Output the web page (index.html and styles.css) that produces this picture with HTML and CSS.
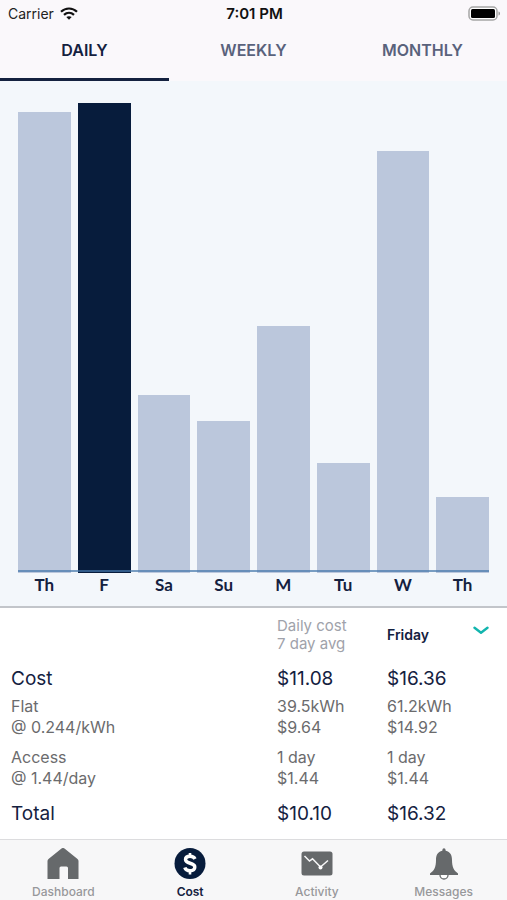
FILE: index.html
```html
<!DOCTYPE html>
<html lang="en">
<head>
    <meta charset="UTF-8">
    <meta name="viewport" content="width=device-width, initial-scale=1.0">
    <title>Energy Cost</title>
    <link rel="stylesheet" href="styles.css">
</head>
<body>
    <header>
        <div class="status-bar">
            <div class="carrier">
                <span>Carrier</span>
                <svg width="18" height="13" viewBox="0 0 18 13" fill="none" stroke="#111" stroke-width="2.2">
                    <path d="M1 4.8C5.6.4 12.4.4 17 4.8"/>
                    <path d="M4 7.9C7 5.1 11 5.1 14 7.9"/>
                    <path d="M9 12.8L6.3 10.1C7.9 8.8 10.1 8.8 11.7 10.1Z" fill="#111" stroke="none"/>
                </svg>
            </div>
            <span class="time">7:01 PM</span>
            <svg class="battery" width="33" height="15" viewBox="0 0 33 15">
                <rect x="1" y="1" width="28" height="13" rx="4" fill="#fff" stroke="#a5a5a5" stroke-width="1.5"/>
                <rect x="3" y="3" width="24" height="9" rx="1.5" fill="#000"/>
                <path d="M30.5 5.5C32.5 6 32.5 9 30.5 9.5Z" fill="#999"/>
            </svg>
        </div>
        <nav class="tabs">
            <a href="#daily" class="active">DAILY</a>
            <a href="#weekly">WEEKLY</a>
            <a href="#monthly">MONTHLY</a>
        </nav>
    </header>

    <main>
        <section class="chart">
            <div class="bars">
                <div class="bar" style="height: 98.1%"></div>
                <div class="bar selected" style="height: 100%"></div>
                <div class="bar" style="height: 37.9%"></div>
                <div class="bar" style="height: 32.3%"></div>
                <div class="bar" style="height: 52.5%"></div>
                <div class="bar" style="height: 23.4%"></div>
                <div class="bar" style="height: 89.7%"></div>
                <div class="bar" style="height: 16.2%"></div>
            </div>
            <div class="days">
                <span>Th</span>
                <span>F</span>
                <span>Sa</span>
                <span>Su</span>
                <span>M</span>
                <span>Tu</span>
                <span>W</span>
                <span>Th</span>
            </div>
        </section>

        <table class="costs">
            <thead>
                <tr>
                    <td></td>
                    <th class="average" scope="col">Daily cost<br>7 day avg</th>
                    <th class="day" scope="col">
                        <div class="day-picker">
                            <select aria-label="Day">
                                <option>Thursday</option>
                                <option selected>Friday</option>
                                <option>Saturday</option>
                                <option>Sunday</option>
                                <option>Monday</option>
                                <option>Tuesday</option>
                                <option>Wednesday</option>
                            </select>
                            <svg width="16" height="9" viewBox="0 0 16 9" fill="none" stroke="#12b5ae" stroke-width="2.4" stroke-linecap="round" stroke-linejoin="round">
                                <path d="M1.5 1.8L8 6.8L14.5 1.8"/>
                            </svg>
                        </div>
                    </th>
                </tr>
            </thead>
            <tbody>
                <tr class="cost">
                    <th scope="row">Cost</th>
                    <td>$11.08</td>
                    <td>$16.36</td>
                </tr>
                <tr class="rate">
                    <th scope="row">Flat<br>@ 0.244/kWh</th>
                    <td>39.5kWh<br>$9.64</td>
                    <td>61.2kWh<br>$14.92</td>
                </tr>
                <tr class="rate">
                    <th scope="row">Access<br>@ 1.44/day</th>
                    <td>1 day<br>$1.44</td>
                    <td>1 day<br>$1.44</td>
                </tr>
                <tr class="total">
                    <th scope="row">Total</th>
                    <td>$10.10</td>
                    <td>$16.32</td>
                </tr>
            </tbody>
        </table>
    </main>

    <nav class="bottom-nav">
        <a href="#dashboard">
            <svg width="32" height="32" viewBox="0 0 32 32">
                <path d="M14.5 .5Q16-.6 17.5 .5L30.5 11Q31.5 12 31.5 13V31H21V20Q21 18.5 19.5 18.5H14Q12.5 18.5 12.5 20V31H.5V13Q.5 12 1.5 11Z" fill="#66696b"/>
            </svg>
            <span>Dashboard</span>
        </a>
        <a href="#cost" class="active">
            <svg width="32" height="32" viewBox="0 0 32 32">
                <circle cx="16" cy="15.5" r="15.5" fill="#071c3c"/>
                <path d="M21 11C20 8.8 18.5 8.3 16 8.3C13.2 8.3 11.5 9.5 11.5 11.6C11.5 16.5 20.8 14 20.8 19C20.8 21.3 18.8 22.7 16 22.7C13.2 22.7 11.5 21.8 10.8 19.5" fill="none" stroke="#fff" stroke-width="3.4"/>
                <path d="M16 5V9M16 22V26.5" stroke="#fff" stroke-width="2.6"/>
            </svg>
            <span>Cost</span>
        </a>
        <a href="#activity">
            <svg width="32" height="32" viewBox="0 0 32 32">
                <rect x=".5" y="3.5" width="31" height="24" rx="2.5" fill="#66696b"/>
                <path d="M3.5 8L8.5 13L11.5 10.8L19.5 19L27 12.5" fill="none" stroke="#f7f7f8" stroke-width="1.5"/>
                <circle cx="19.5" cy="19.5" r="2" fill="#fff"/>
            </svg>
            <span>Activity</span>
        </a>
        <a href="#messages">
            <svg width="32" height="32" viewBox="0 0 32 32">
                <circle cx="16" cy="27" r="4" fill="#fff" stroke="#66696b" stroke-width="1.3"/>
                <path d="M14.3 2.8C14.3-.5 17.7-.5 17.7 2.8C22.5 3.8 24 7.5 24 12C24 19.5 26 22.5 30 25.5V27H2V25.5C6 22.5 8 19.5 8 12C8 7.5 9.5 3.8 14.3 2.8Z" fill="#66696b"/>
            </svg>
            <span>Messages</span>
        </a>
    </nav>
</body>
</html>
```
FILE: styles.css
```css
* {
    box-sizing: border-box;
}
body {
    display: flex;
    flex-direction: column;
    height: 100vh;
    min-height: 640px;
    margin: 0;
    font-family: Inter, Roboto, sans-serif;
    background-color: #fff;
    color: #14213f;
}
a {
    text-decoration: none;
}

/* Status bar and tabs */
header {
    background-color: #faf8fb;
}
.status-bar {
    display: grid;
    grid-template-columns: 1fr auto 1fr;
    align-items: center;
    height: 27px;
    padding: 0 6px 0 8px;
    font-size: 14px;
    color: #222;
}
.carrier {
    display: flex;
    align-items: center;
    gap: 6px;
}
.time {
    font-size: 15px;
    font-weight: 600;
    color: #111;
}
.battery {
    justify-self: end;
}
.tabs {
    display: grid;
    grid-template-columns: repeat(3, 1fr);
}
.tabs a {
    height: 54px;
    border-bottom: 3px solid transparent;
    font-size: 16px;
    font-weight: 600;
    line-height: 46px;
    text-align: center;
    color: #59627c;
}
.tabs a.active {
    border-color: #14213f;
    color: #14213f;
}

main {
    flex: 1;
    display: flex;
    flex-direction: column;
}

/* Chart */
.chart {
    flex: 1;
    display: flex;
    flex-direction: column;
    padding: 22px 18px 9px;
    background-color: #f3f7fb;
    border-bottom: 2px solid #c2c5ca;
}
.bars,
.days {
    display: grid;
    grid-template-columns: repeat(8, 1fr);
    column-gap: 7px;
}
.bars {
    position: relative;
    flex: 1;
    align-items: end;
}
.bars::after {
    content: "";
    position: absolute;
    left: 0;
    right: 0;
    bottom: 1px;
    height: 2px;
    background-color: rgba(67, 118, 170, 0.7);
}
.bar {
    background-color: #bbc7dc;
}
.bar.selected {
    background-color: #071c3c;
}
.days {
    font-family: Lato, sans-serif;
    font-size: 17px;
    font-weight: bold;
    line-height: 24px;
    text-align: center;
}

/* Cost table */
.costs {
    width: 100%;
    table-layout: fixed;
    border-collapse: collapse;
}
.costs th,
.costs td {
    padding: 0;
    font-weight: 400;
    text-align: left;
    vertical-align: top;
}
.costs th:first-child {
    padding-left: 11px;
}
.costs .average {
    width: 110px;
    padding: 9px 0 7px;
    font-size: 15px;
    line-height: 18px;
    color: #a0a2aa;
}
.costs .day {
    width: 120px;
    padding-top: 18px;
}
.day-picker {
    display: flex;
    justify-content: space-between;
    padding-right: 18px;
}
.day-picker select {
    appearance: none;
    width: 80px;
    padding: 0;
    border: none;
    background: none;
    font-family: inherit;
    font-size: 14px;
    font-weight: 600;
    line-height: 18px;
    color: #14213f;
}
.costs .cost > *,
.costs .total > * {
    font-size: 19px;
    line-height: 24px;
}
.costs .cost > * {
    padding-top: 7px;
    padding-bottom: 5px;
}
.costs .rate > * {
    padding-bottom: 9px;
    font-size: 16px;
    line-height: 21px;
    color: #6b6b6d;
}
.costs .total > * {
    padding-top: 4px;
    padding-bottom: 13px;
}

/* Bottom navigation */
.bottom-nav {
    display: grid;
    grid-template-columns: repeat(4, 1fr);
    padding-top: 8px;
    border-top: 1px solid #dcdcde;
    background-color: #f7f7f8;
}
.bottom-nav a {
    display: flex;
    flex-direction: column;
    align-items: center;
    gap: 4px;
    font-size: 12px;
    font-weight: 500;
    line-height: 16px;
    color: #97989b;
}
.bottom-nav a.active {
    font-weight: 600;
    color: #14213f;
}
```
